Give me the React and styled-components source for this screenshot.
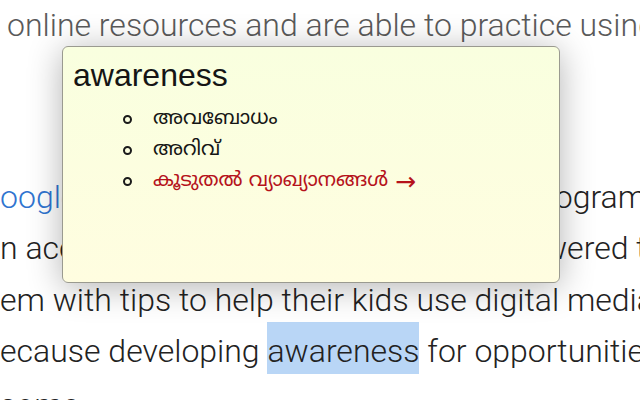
import React from "react";
import styled, { createGlobalStyle } from "styled-components";

const Global = createGlobalStyle`
  html, body { margin: 0; padding: 0; background: #fff; overflow: hidden; }
`;

const Page = styled.div`
  position: relative;
  width: 640px;
  height: 400px;
  overflow: hidden;
  background: #fff;
`;

const Article = styled.div`
  font-family: Roboto, "Liberation Sans", sans-serif;
  font-weight: 300;
  font-size: 32px;
  line-height: 51.5px;
  color: #222;
`;

const Paragraph = styled.div`
  margin: ${(p) => p.$mt || 0}px 0 0 0;
  color: ${(p) => (p.$muted ? "#5a5a5a" : "#222")};
`;

const Line = styled.div`
  white-space: nowrap;
  padding-left: ${(p) => p.$indent || 0}px;
  margin-top: ${(p) => p.$gap || 0}px;
`;

const Link = styled.span`
  color: #2f74d0;
`;

const Selected = styled.span`
  background: #b9d6f6;
  padding: 10px 0 4px;
`;

const Popup = styled.div`
  position: absolute;
  left: 62px;
  top: 46px;
  width: 498px;
  height: 237px;
  box-sizing: border-box;
  border: 1px solid #9a9a90;
  border-radius: 6px;
  background: linear-gradient(180deg, #f9ffdf 0%, #fffde0 100%);
  box-shadow: 0 4px 34px rgba(0, 0, 0, 0.3);
  padding: 8px 10px;
`;

const Title = styled.div`
  font-family: "Liberation Sans", Arial, sans-serif;
  font-size: 32px;
  line-height: 40px;
  color: #151515;
`;

const Senses = styled.ul`
  margin: 9px 0 0 0;
  padding-left: 50px;
  list-style: none;
  font-family: "Noto Sans Malayalam", "Noto Sans", sans-serif;
  font-size: 20px;
  line-height: 31px;
`;

const Sense = styled.li`
  display: flex;
  align-items: center;
  color: ${(p) => (p.$more ? "#b5121b" : "#151515")};

  &::before {
    content: "";
    flex: none;
    box-sizing: border-box;
    width: 9px;
    height: 9px;
    border: 2px solid #1a1a1a;
    border-radius: 50%;
    margin-right: 21px;
  }
`;

const Arrow = styled.span`
  font-family: "DejaVu Sans", sans-serif;
  font-size: 25px;
  line-height: 20px;
  margin-left: 7px;
`;

export default function App() {
  return (
    <Page>
      <Global />
      <Article>
        <Paragraph $muted>
          <Line $indent={7}>online resources and are able to practice using</Line>
        </Paragraph>
        <Paragraph $mt={120}>
          <Line>
            <Link>oogle</Link>'s Be Internet Awesome student programs
          </Line>
          <Line>n access games and parents are empowered to</Line>
          <Line>em with tips to help their kids use digital media</Line>
          <Line>
            ecause developing <Selected>awareness</Selected> for opportunities
          </Line>
          <Line $gap={2}>some</Line>
        </Paragraph>
      </Article>
      <Popup>
        <Title>awareness</Title>
        <Senses>
          <Sense>അവബോധം</Sense>
          <Sense>അറിവ്</Sense>
          <Sense $more>
            കൂടുതൽ വ്യാഖ്യാനങ്ങൾ<Arrow>→</Arrow>
          </Sense>
        </Senses>
      </Popup>
    </Page>
  );
}
